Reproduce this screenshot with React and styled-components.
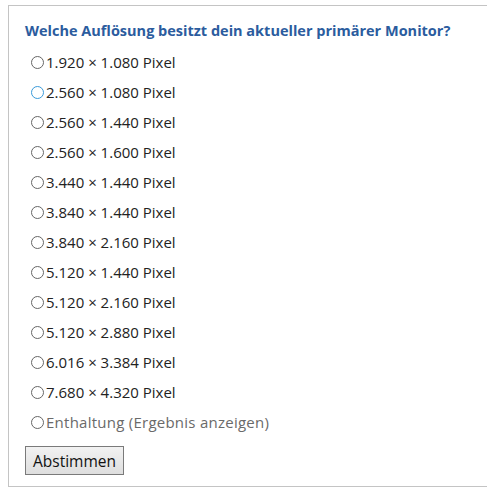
import React from 'react'
import styled, { createGlobalStyle } from 'styled-components'

const GlobalStyle = createGlobalStyle`
   html, body {
      margin: 0;
      padding: 0;
      background: #fff;
      overflow: hidden;
   }
   body {
      font-family: 'Open Sans', 'Noto Sans', sans-serif;
   }
`

const options = [
   '1.920 × 1.080 Pixel',
   '2.560 × 1.080 Pixel',
   '2.560 × 1.440 Pixel',
   '2.560 × 1.600 Pixel',
   '3.440 × 1.440 Pixel',
   '3.840 × 1.440 Pixel',
   '3.840 × 2.160 Pixel',
   '5.120 × 1.440 Pixel',
   '5.120 × 2.160 Pixel',
   '5.120 × 2.880 Pixel',
   '6.016 × 3.384 Pixel',
   '7.680 × 4.320 Pixel',
]

const App = () => {
   return (
      <>
         <GlobalStyle />
         <Poll>
            <Question>Welche Auflösung besitzt dein aktueller primärer Monitor?</Question>
            <Options>
               {options.map((label, i) => (
                  <Option key={label}>
                     <Radio $focus={i === 1} />
                     <Label>{label}</Label>
                  </Option>
               ))}
               <Option $muted>
                  <Radio />
                  <Label $wide>Enthaltung (Ergebnis anzeigen)</Label>
               </Option>
            </Options>
            <VoteButton type='button'>Abstimmen</VoteButton>
         </Poll>
      </>
   )
}

const Poll = styled.div`
   margin: 5px 0 0 8px;
   height: 482px;
   border: 1px solid #c4c4c4;
   border-right: none;
   box-sizing: border-box;
   padding: 14px 0 0 16px;
`
const Question = styled.h3`
   margin: 0 0 5px 0;
   font-size: 14.5px;
   font-weight: 700;
   line-height: 22px;
   color: #2b5c9e;
`
const Options = styled.div`
   display: flex;
   flex-direction: column;
`
const Option = styled.label`
   display: flex;
   align-items: center;
   height: 30px;
   font-size: 15px;
   color: ${(p) => (p.$muted ? '#6a6a6a' : '#222')};
`
const Label = styled.span`
   margin-left: 2px;
   letter-spacing: ${(p) => (p.$wide ? '0.25px' : '0')};
`
const Radio = styled.span`
   display: inline-block;
   box-sizing: border-box;
   width: 13px;
   height: 13px;
   margin-left: 6px;
   border-radius: 50%;
   border: 1.3px solid ${(p) => (p.$focus ? '#3a9ad9' : '#666')};
`
const VoteButton = styled.button`
   margin-top: 9px;
   height: 29px;
   padding: 0 7px;
   font-family: inherit;
   font-size: 15.5px;
   color: #111;
   border: 1px solid #7a7a7a;
   border-radius: 0;
   background: linear-gradient(#f2f2f2, #dedede);
`

export default App
